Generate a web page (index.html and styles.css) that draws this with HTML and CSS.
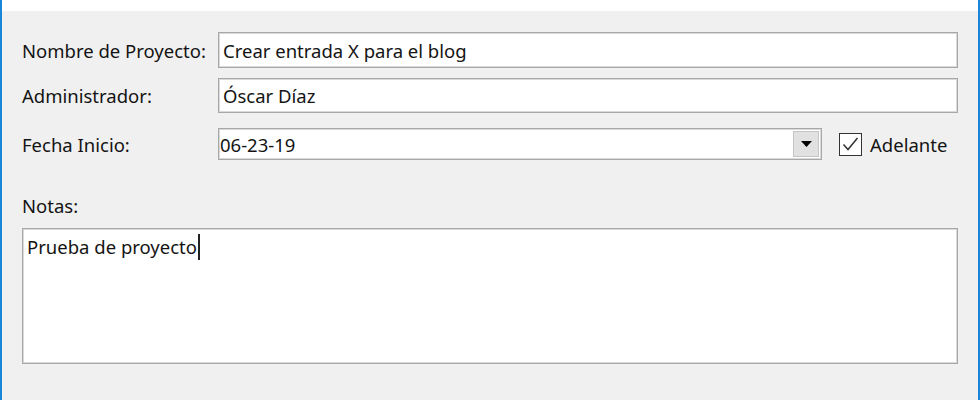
FILE: index.html
```html
<!DOCTYPE html>
<html>
<head>
<meta charset="utf-8">
<link rel="stylesheet" href="styles.css">
</head>
<body>
<div class="window">
  <div class="titlebar"></div>
  <div class="form">
    <div class="row row1">
      <span class="label">Nombre de Proyecto:</span>
      <div class="field">Crear entrada X para el blog</div>
    </div>
    <div class="row row2">
      <span class="label">Administrador:</span>
      <div class="field">Óscar Díaz</div>
    </div>
    <div class="row row3">
      <span class="label">Fecha Inicio:</span>
      <div class="combo">
        <span class="combo-text">06-23-19</span>
        <span class="combo-btn"><svg width="11" height="6" viewBox="0 0 11 6"><polygon points="0,0 11,0 5.5,6" fill="#000"/></svg></span>
      </div>
      <div class="check">
        <span class="box"><svg width="21" height="21" viewBox="0 0 21 21"><polyline points="3.5,10.5 8,15.5 17.5,4" fill="none" stroke="#333" stroke-width="1.5"/></svg></span>
        <span class="check-label">Adelante</span>
      </div>
    </div>
    <div class="notes-label">Notas:</div>
    <div class="notes"><span>Prueba de proyecto</span><span class="caret"></span></div>
  </div>
</div>
</body>
</html>
```
FILE: styles.css
```css
html, body {
  margin: 0;
  padding: 0;
}
body {
  width: 980px;
  height: 400px;
  overflow: hidden;
  background: #f0f0f0;
  font-family: "Noto Sans", "Open Sans", sans-serif;
  font-size: 18.5px;
  color: #141414;
}
.window {
  height: 400px;
  border-left: 2px solid #1a86d9;
  border-right: 2px solid #1a86d9;
  box-sizing: border-box;
  background: #f0f0f0;
}
.titlebar {
  height: 11px;
  background: #ffffff;
}
.form {
  padding: 21px 20px 0 20px;
}
.row {
  display: flex;
  align-items: center;
}
.label {
  width: 196px;
  flex: none;
}
.field {
  flex: 1;
  height: 36px;
  box-sizing: border-box;
  border: 1px solid #a8a8a8;
  box-shadow: inset 0 0 0 1px #d9d9d9;
  background: #fff;
  display: flex;
  align-items: center;
  padding-left: 4px;
}
.row2 {
  margin-top: 10px;
}
.row2 .field {
  height: 35px;
}
.row3 {
  margin-top: 15px;
}
.combo {
  flex: 1;
  height: 32px;
  box-sizing: border-box;
  border: 1px solid #a8a8a8;
  box-shadow: inset 0 0 0 1px #d9d9d9;
  background: #fff;
  display: flex;
  align-items: center;
  padding: 2px 2px 2px 1px;
}
.combo-text {
  flex: 1;
}
.combo-btn {
  width: 26px;
  height: 26px;
  box-sizing: border-box;
  background: #e1e1e1;
  border: 1px solid #c4c4c4;
  display: flex;
  align-items: center;
  justify-content: center;
}
.check {
  width: 119px;
  margin-left: 17px;
  display: flex;
  align-items: center;
  flex: none;
}
.box {
  width: 23px;
  height: 23px;
  box-sizing: border-box;
  border: 1px solid #333;
  background: #fff;
  display: flex;
  align-items: center;
  justify-content: center;
}
.check-label {
  margin-left: 8px;
}
.notes-label {
  margin-top: 35px;
  height: 22px;
  line-height: 22px;
}
.notes {
  margin-top: 11px;
  height: 136px;
  box-sizing: border-box;
  border: 1px solid #a8a8a8;
  box-shadow: inset 0 0 0 1px #d9d9d9;
  background: #fff;
  padding: 5px 4px;
  display: flex;
  align-items: flex-start;
  line-height: 26px;
}
.caret {
  width: 2px;
  height: 26px;
  background: #222;
  margin-left: 1px;
}
```
